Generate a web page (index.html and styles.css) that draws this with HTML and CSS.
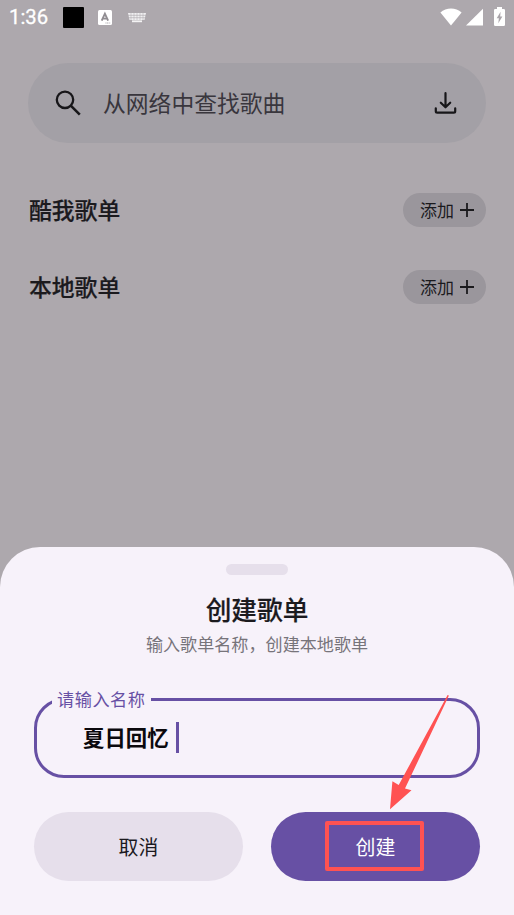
FILE: index.html
```html
<!DOCTYPE html>
<html lang="zh-CN">
<head>
<meta charset="utf-8">
<title>创建歌单</title>
<link rel="stylesheet" href="styles.css">
</head>
<body>
<div class="screen">
  <header class="status">
    <span class="time">1:36</span>
    <span class="block"></span>
    <svg class="ime" width="14" height="15" viewBox="0 0 14 15"><rect width="14" height="15" rx="1.500" fill="#fff"/><path d="M3.700 10.600 6.900 3.700l3.200 6.900M4.900 8.600h4" fill="none" stroke="#918d92" stroke-width="1.900"/><path d="M7.500 13h5" stroke="#aaa6ab" stroke-dasharray="1 .6"/></svg>
    <svg class="keys" width="18" height="10" viewBox="0 0 18 10"><path d="M0 0h18L16.500 7H1.500Z" fill="#f0eff1"/><path d="M0 2.300h18M1 4.700h16" stroke="#aaa5aa" stroke-width=".6"/><path d="M3 0v7M6 0v7M9 0v7M12 0v7M15 0v7" stroke="#aaa5aa" stroke-width=".5"/><path d="M4 8.300h10" stroke="#f4f3f4" stroke-width="1.800"/></svg>
    <span class="indicators">
      <svg width="22" height="18" viewBox="0 0 22 18"><path d="M.4 4.500C6.200-.9 15.800-.9 21.600 4.500L11 17.600Z" fill="#fff"/></svg>
      <svg width="17" height="18" viewBox="0 0 17 18"><path d="M17 .8V17.500H0Z" fill="#fff"/></svg>
      <svg class="battery" width="11" height="19" viewBox="0 0 11 19"><path d="M3 0h5v2h1.700Q11 2 11 3.300v14.400Q11 19 9.700 19H1.300Q0 19 0 17.700V3.300Q0 2 1.300 2H3Z" fill="#fff"/><path d="M6.600 4.800 2.700 11.200h2.200L4.300 16.200 8.400 9.600H6.200Z" fill="#aaa5aa"/></svg>
    </span>
  </header>
  <div class="search">
    <svg class="lens" width="26" height="26" viewBox="0 0 26 26" fill="none" stroke="#171619"><circle cx="10" cy="9.800" r="8.200" stroke-width="2.300"/><path d="m15.800 15.700 9 9" stroke-width="2.600"/></svg>
    <span class="hint">从网络中查找歌曲</span>
    <svg class="download" width="23" height="22" viewBox="0 0 23 22" fill="none" stroke="#171619" stroke-width="2.200" stroke-linecap="round" stroke-linejoin="round"><path d="M11.500 1.200V15M6.800 10.700 11.500 15.300l4.700-4.600M1.800 16.300v3q0 1.400 1.400 1.400h16.600q1.400 0 1.400-1.400v-3"/></svg>
  </div>
  <section class="row">
    <h2>酷我歌单</h2>
    <div class="chip"><span>添加</span><svg width="14" height="14" viewBox="0 0 14 14"><path d="M7 0v14M0 7h14" stroke="#1b1a1d" stroke-width="1.800"/></svg></div>
  </section>
  <section class="row">
    <h2>本地歌单</h2>
    <div class="chip"><span>添加</span><svg width="14" height="14" viewBox="0 0 14 14"><path d="M7 0v14M0 7h14" stroke="#1b1a1d" stroke-width="1.800"/></svg></div>
  </section>
  <main class="sheet">
    <div class="handle"></div>
    <h1>创建歌单</h1>
    <p class="sub">输入歌单名称，创建本地歌单</p>
    <div class="field">
      <span class="label">请输入名称</span>
      <span class="value">夏日回忆</span><span class="caret"></span>
    </div>
    <div class="actions">
      <div class="button cancel">取消</div>
      <div class="button create"><span class="mark">创建</span></div>
    </div>
    <svg class="arrow" width="62" height="116" viewBox="0 0 62 116"><path d="M60.300 0 59.600 0 10.700 90 4.400 86.200 2 114.300 23.500 95.200 17 93.600 60.700 1Z" fill="#ff5252"/></svg>
  </main>
</div>
</body>
</html>
```
FILE: styles.css
```css
* { box-sizing: border-box; }

body {
  margin: 0;
  background: #ada8ad;
  color: #1b1a1e;
  font-family: "Noto Sans CJK SC", sans-serif;
}

svg { display: block; flex: none; }

.screen {
  display: flex;
  flex-direction: column;
  width: 514px;
  height: 915px;
  overflow: hidden;
}

.status {
  display: flex;
  align-items: center;
  height: 35px;
  flex: none;
  padding: 0 9px;
}

.time {
  width: 54px;
  color: #fff;
  font: 400 20.300px/35px Roboto, sans-serif;
  -webkit-text-stroke: .3px #fff;
}

.block {
  width: 21px;
  height: 21px;
  border-radius: 1px;
  background: #000;
}

.ime { margin-left: 14px; }
.keys { margin-left: 16px; }

.indicators {
  display: flex;
  align-items: center;
  gap: 4px;
  margin-left: auto;
  padding-bottom: 2px;
}

.battery { margin: 0 0 0 7px; }

.search {
  display: flex;
  align-items: center;
  flex: none;
  height: 80px;
  margin: 28px 28px 49px;
  padding: 0 29px 0 27px;
  border-radius: 40px;
  background: #a3a0a6;
}

.hint {
  margin-left: 22px;
  color: #39363d;
  font-size: 22.800px;
  line-height: 34px;
}

.download { margin-left: auto; }

.row {
  display: flex;
  align-items: center;
  justify-content: space-between;
  flex: none;
  height: 36px;
  margin: 0 28px 41px 29px;
}

h1, h2 {
  margin: 0;
  font-weight: 500;
  -webkit-text-stroke: .2px currentColor;
}

h2 { font-size: 22.800px; line-height: 36px; }

.chip {
  display: flex;
  align-items: center;
  width: 83px;
  height: 34px;
  padding-left: 17px;
  gap: 6px;
  border-radius: 17px;
  background: #9a969c;
  font-size: 17px;
  line-height: 34px;
}

.sheet {
  position: relative;
  display: flex;
  flex-direction: column;
  align-items: center;
  height: 368px;
  flex: none;
  margin-top: auto;
  padding: 17px 34px 0;
  border-radius: 40px 40px 0 0;
  background: #f7f2fa;
}

.handle {
  width: 62px;
  height: 11px;
  border-radius: 5.500px;
  background: #e6dfeb;
}

h1 {
  margin-top: 15px;
  font-size: 25.700px;
  line-height: 38px;
}

.sub {
  margin: 3px 0 0;
  color: #77747a;
  font-size: 17.100px;
  line-height: 26px;
}

.field {
  position: relative;
  display: flex;
  align-items: center;
  align-self: stretch;
  height: 80px;
  margin-top: 41px;
  padding-left: 46px;
  border: 3px solid #6750a4;
  border-radius: 30px;
}

.label {
  position: absolute;
  top: -15px;
  left: 15px;
  padding: 0 6px 0 5px;
  background: #f7f2fa;
  color: #6750a4;
  font-size: 17.200px;
  line-height: 25px;
  letter-spacing: .500px;
}

.value {
  padding-bottom: 2px;
  color: #0b090d;
  font-size: 21.400px;
  font-weight: 700;
  line-height: 32px;
}

.caret {
  width: 3px;
  height: 31px;
  margin: 0 0 1px 7px;
  background: #6750a4;
}

.actions {
  display: flex;
  align-self: stretch;
  gap: 28px;
  margin-top: 34px;
}

.button {
  display: flex;
  align-items: center;
  justify-content: center;
  flex: 1;
  height: 69px;
  border-radius: 34.500px;
  font-size: 19.900px;
}

.cancel { background: #e6dfeb; }
.create { background: #6750a4; color: #fff; }

.mark {
  width: 99px;
  height: 50px;
  margin: 0 2px 1px 0;
  padding-left: 2px;
  border: 4px solid #ff5252;
  border-radius: 2px;
  line-height: 44px;
  text-align: center;
}

.arrow {
  position: absolute;
  top: 148px;
  left: 388px;
}
```
